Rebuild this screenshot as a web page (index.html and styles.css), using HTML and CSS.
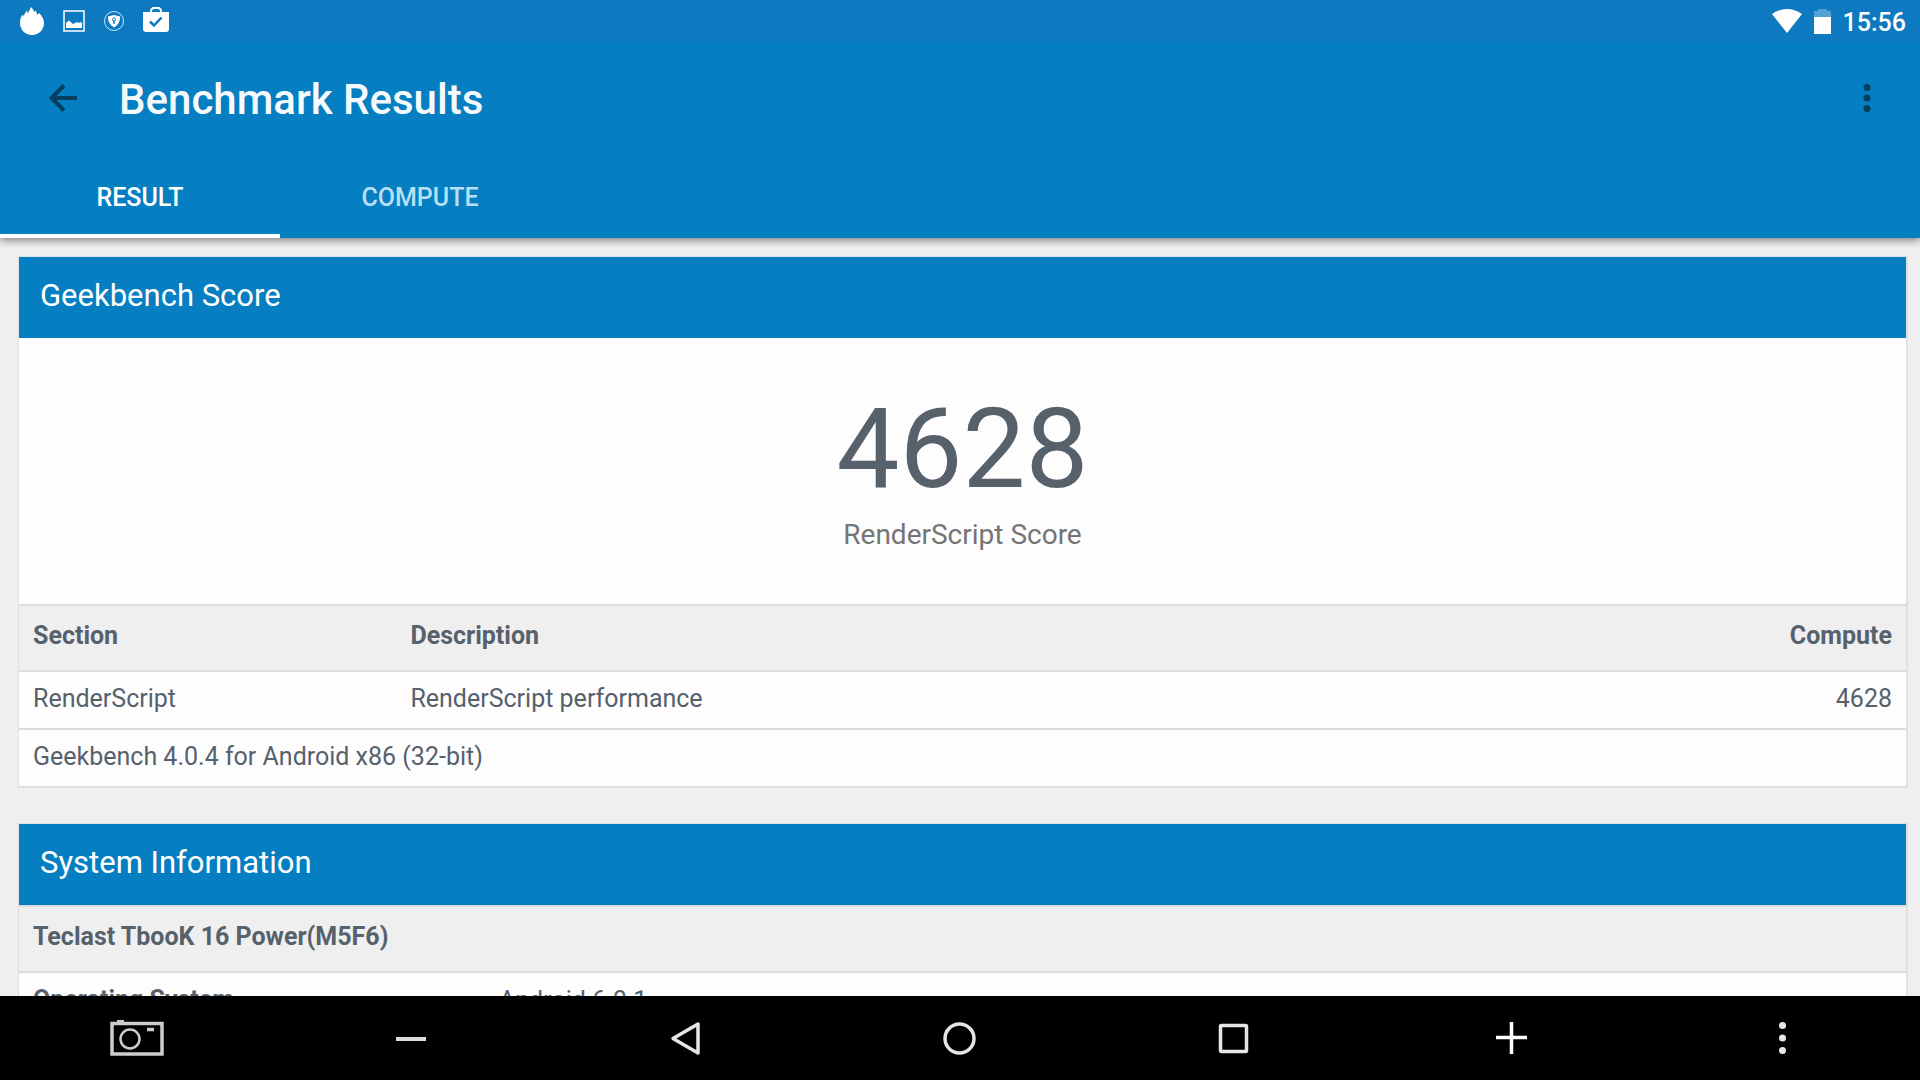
FILE: index.html
```html
<!DOCTYPE html>
<html lang="en">
<head>
  <meta charset="UTF-8">
  <meta name="viewport" content="width=device-width, initial-scale=1.0">
  <title>Benchmark Results</title>
  <link rel="stylesheet" href="styles.css">
</head>
<body>
  <div class="status-bar">
    <div class="notifications">
      <svg width="24" height="28" viewBox="0 0 24 28" fill="#fff">
        <path d="M12 28C5 28 0 22.500 0 16C0 12 1 9 3 7.500L3.500 9.500C4.500 7 5.500 5 7 3.500L7.500 6.500C8.500 5.500 9.500 3 11 0C12.500 1.500 13.500 3 14 5L15.500 3.500C16.500 5 17 6.500 17.500 8L19 6C22 9 24 12 24 16C24 22.500 19 28 12 28Z"/>
      </svg>
      <svg width="22" height="22" viewBox="0 0 22 22">
        <rect x="1" y="1" width="20" height="20" fill="none" stroke="#fff" stroke-width="1.500"/>
        <path d="M3 18V13L6 10.500L10 14L14 12L16 13L18 12L19 13V18Z" fill="#fff"/>
      </svg>
      <svg width="20" height="20" viewBox="0 0 20 20">
        <circle cx="10" cy="10" r="9.500" fill="none" stroke="#fff" stroke-opacity="0.8"/>
        <path d="M10 4L16 5.500C16 11 14 14 10 16.500C6 14 4 11 4 5.500Z" fill="#fff"/>
        <path d="M10 9.500V13" stroke="#0d79c0" stroke-width="1.500"/>
        <circle cx="10" cy="8.500" r="1.500" fill="none" stroke="#0d79c0"/>
      </svg>
      <svg width="26" height="28" viewBox="0 0 26 28">
        <path d="M8 6V3L10 1H16L18 3V6" fill="none" stroke="#fff" stroke-width="2"/>
        <path d="M0 5H26V22Q26 25 23 25H3Q0 25 0 22Z" fill="#fff"/>
        <path d="M7 14.500L11 18.500L18.500 10.500" fill="none" stroke="#0d79c0" stroke-width="2.500"/>
      </svg>
    </div>
    <div class="system-icons">
      <svg width="30" height="24" viewBox="0 0 30 24" fill="#fff">
        <path d="M15 24L0 5Q15 -5 30 5Z"/>
      </svg>
      <svg width="17" height="25" viewBox="0 0 17 25" fill="#fff">
        <path d="M0 2H4V0H13V2H17V8H0Z" fill-opacity="0.3"/>
        <rect y="8" width="17" height="17"/>
      </svg>
      <span class="clock">15:56</span>
    </div>
  </div>

  <header class="app-bar">
    <div class="toolbar">
      <button class="icon-button" type="button" aria-label="Back">
        <svg width="28" height="28" viewBox="0 0 28 28" fill="none" stroke="#043f5f" stroke-width="4">
          <path d="M28 14H3M15 1.500L2.500 14L15 26.500"/>
        </svg>
      </button>
      <h1>Benchmark Results</h1>
      <button class="icon-button" type="button" aria-label="More options">
        <svg width="8" height="28" viewBox="0 0 8 28" fill="#043f5f">
          <circle cx="4" cy="3.500" r="3.500"/>
          <circle cx="4" cy="14" r="3.500"/>
          <circle cx="4" cy="24.500" r="3.500"/>
        </svg>
      </button>
    </div>
    <nav class="tabs">
      <a class="tab active" href="#result">RESULT</a>
      <a class="tab" href="#compute">COMPUTE</a>
    </nav>
  </header>

  <main class="content">
    <section class="card" id="result">
      <h2>Geekbench Score</h2>
      <div class="score">
        <div class="score-value">4628</div>
        <div class="score-label">RenderScript Score</div>
      </div>
      <table class="results">
        <thead>
          <tr>
            <th class="section-col">Section</th>
            <th>Description</th>
            <th class="number">Compute</th>
          </tr>
        </thead>
        <tbody>
          <tr>
            <td>RenderScript</td>
            <td>RenderScript performance</td>
            <td class="number">4628</td>
          </tr>
          <tr>
            <td colspan="3">Geekbench 4.0.4 for Android x86 (32-bit)</td>
          </tr>
        </tbody>
      </table>
    </section>

    <section class="card">
      <h2>System Information</h2>
      <table class="system">
        <thead>
          <tr>
            <th colspan="2">Teclast TbooK 16 Power(M5F6)</th>
          </tr>
        </thead>
        <tbody>
          <tr>
            <th class="name-col" scope="row">Operating System</th>
            <td>Android 6.0.1</td>
          </tr>
        </tbody>
      </table>
    </section>
  </main>

  <footer class="nav-bar">
    <button type="button" aria-label="Screenshot">
      <svg width="54" height="36" viewBox="0 0 54 36" fill="none" stroke="#ccc">
        <rect x="2" y="3.500" width="50" height="30.500" stroke-width="3.500"/>
        <path d="M7 1.500H14" stroke-width="3"/>
        <circle cx="20" cy="19" r="9.500" stroke-width="2.500"/>
        <path d="M37 9.500H44" stroke-width="3.500"/>
      </svg>
    </button>
    <button type="button" aria-label="Volume down">
      <svg width="32" height="32" viewBox="0 0 32 32" fill="none" stroke="#ddd" stroke-width="4">
        <path d="M1 17H31"/>
      </svg>
    </button>
    <button type="button" aria-label="Back">
      <svg width="30" height="34" viewBox="0 0 30 34" fill="none" stroke="#e6e6e6" stroke-width="3.500" stroke-linejoin="round">
        <path d="M27 3V32L2 17.500Z"/>
      </svg>
    </button>
    <button type="button" aria-label="Home">
      <svg width="34" height="34" viewBox="0 0 34 34" fill="none" stroke="#e6e6e6" stroke-width="3.500">
        <circle cx="16.500" cy="17.500" r="14.500"/>
      </svg>
    </button>
    <button type="button" aria-label="Recent apps">
      <svg width="30" height="30" viewBox="0 0 30 30" fill="none" stroke="#e6e6e6" stroke-width="3.500">
        <rect x="1.500" y="2.500" width="26" height="26" rx="1"/>
      </svg>
    </button>
    <button type="button" aria-label="Volume up">
      <svg width="32" height="34" viewBox="0 0 32 34" fill="none" stroke="#fff" stroke-width="3.500">
        <path d="M3 16.500H34M18.500 1V33"/>
      </svg>
    </button>
    <button type="button" aria-label="Menu">
      <svg width="8" height="34" viewBox="0 0 8 34" fill="#e6e6e6">
        <circle cx="3.500" cy="4.500" r="3.500"/>
        <circle cx="3.500" cy="17" r="3.500"/>
        <circle cx="3.500" cy="29.500" r="3.500"/>
      </svg>
    </button>
  </footer>
</body>
</html>
```

FILE: styles.css
```css
* {
  box-sizing: border-box;
}
body {
  display: flex;
  flex-direction: column;
  height: 100vh;
  margin: 0;
  overflow: hidden;
  background-color: #efefef;
  color: #56616c;
  font-family: Roboto, sans-serif;
  font-size: 25px;
  line-height: 30px;
}
h1, h2 {
  margin: 0;
}
svg {
  display: block;
  overflow: visible;
}
button {
  display: flex;
  align-items: center;
  justify-content: center;
  padding: 0;
  border: none;
  background: none;
  cursor: pointer;
}

/* Status bar */
.status-bar {
  position: relative;
  z-index: 1;
  display: flex;
  flex-shrink: 0;
  justify-content: space-between;
  height: 42px;
  padding: 0 14px 0 20px;
  background-color: #0d79c0;
  color: #fff;
}
.notifications {
  display: flex;
  align-items: center;
  gap: 19px;
}
.system-icons {
  display: flex;
  align-items: center;
  gap: 12px;
}
.clock {
  padding-top: 4px;
  font-weight: 500;
}

/* App bar */
.app-bar {
  position: relative;
  flex-shrink: 0;
  background-color: #057fc1;
  box-shadow: 0 2px 8px rgba(0, 0, 0, 0.5);
}
.toolbar {
  display: flex;
  align-items: center;
  height: 112px;
  padding: 0 25px 0 35px;
}
.toolbar h1 {
  flex: 1;
  padding: 4px 0 0 28px;
  color: #f5fafd;
  font-size: 42px;
  font-weight: 500;
  line-height: 50px;
}
.icon-button {
  width: 56px;
  height: 56px;
}
.tabs {
  display: flex;
}
.tab {
  display: flex;
  align-items: center;
  justify-content: center;
  width: 280px;
  height: 84px;
  border-bottom: 4px solid transparent;
  padding-top: 8px;
  color: #b9dff5;
  font-weight: 500;
  text-decoration: none;
}
.tab.active {
  border-bottom-color: #fff;
  color: #fff;
}

/* Cards */
.content {
  flex: 1;
  min-height: 0;
  padding: 18px 12px 0 18px;
  overflow: hidden;
}
.card {
  margin-bottom: 35px;
  border: 1px solid #e0e0e0;
  border-right-width: 2px;
  background-color: #fdfdfd;
}
.card h2 {
  height: 81px;
  padding: 19px 21px;
  background-color: #057fc1;
  color: #fff;
  font-size: 31px;
  font-weight: 400;
  line-height: 40px;
}
.score {
  padding: 45px 0 49px;
  text-align: center;
}
.score-value {
  font-size: 112px;
  line-height: 132px;
}
.score-label {
  color: #757575;
  font-size: 28px;
  line-height: 40px;
}

/* Tables */
table {
  width: 100%;
  border-spacing: 0;
}
th, td {
  padding: 12px 14px 14px;
  border-bottom: 2px solid #dcdcdc;
  text-align: left;
}
thead th {
  padding: 15px 14px 19px;
  border-top: 2px solid #dcdcdc;
  background-color: #efefef;
}
tbody tr:last-child td {
  border-bottom-width: 1px;
}
.section-col {
  width: 20%;
}
.name-col {
  width: 466px;
}
th.number, td.number {
  text-align: right;
}

/* Navigation bar */
.nav-bar {
  display: flex;
  flex-shrink: 0;
  height: 84px;
  background-color: #000;
}
.nav-bar button {
  flex: 1;
}
```
